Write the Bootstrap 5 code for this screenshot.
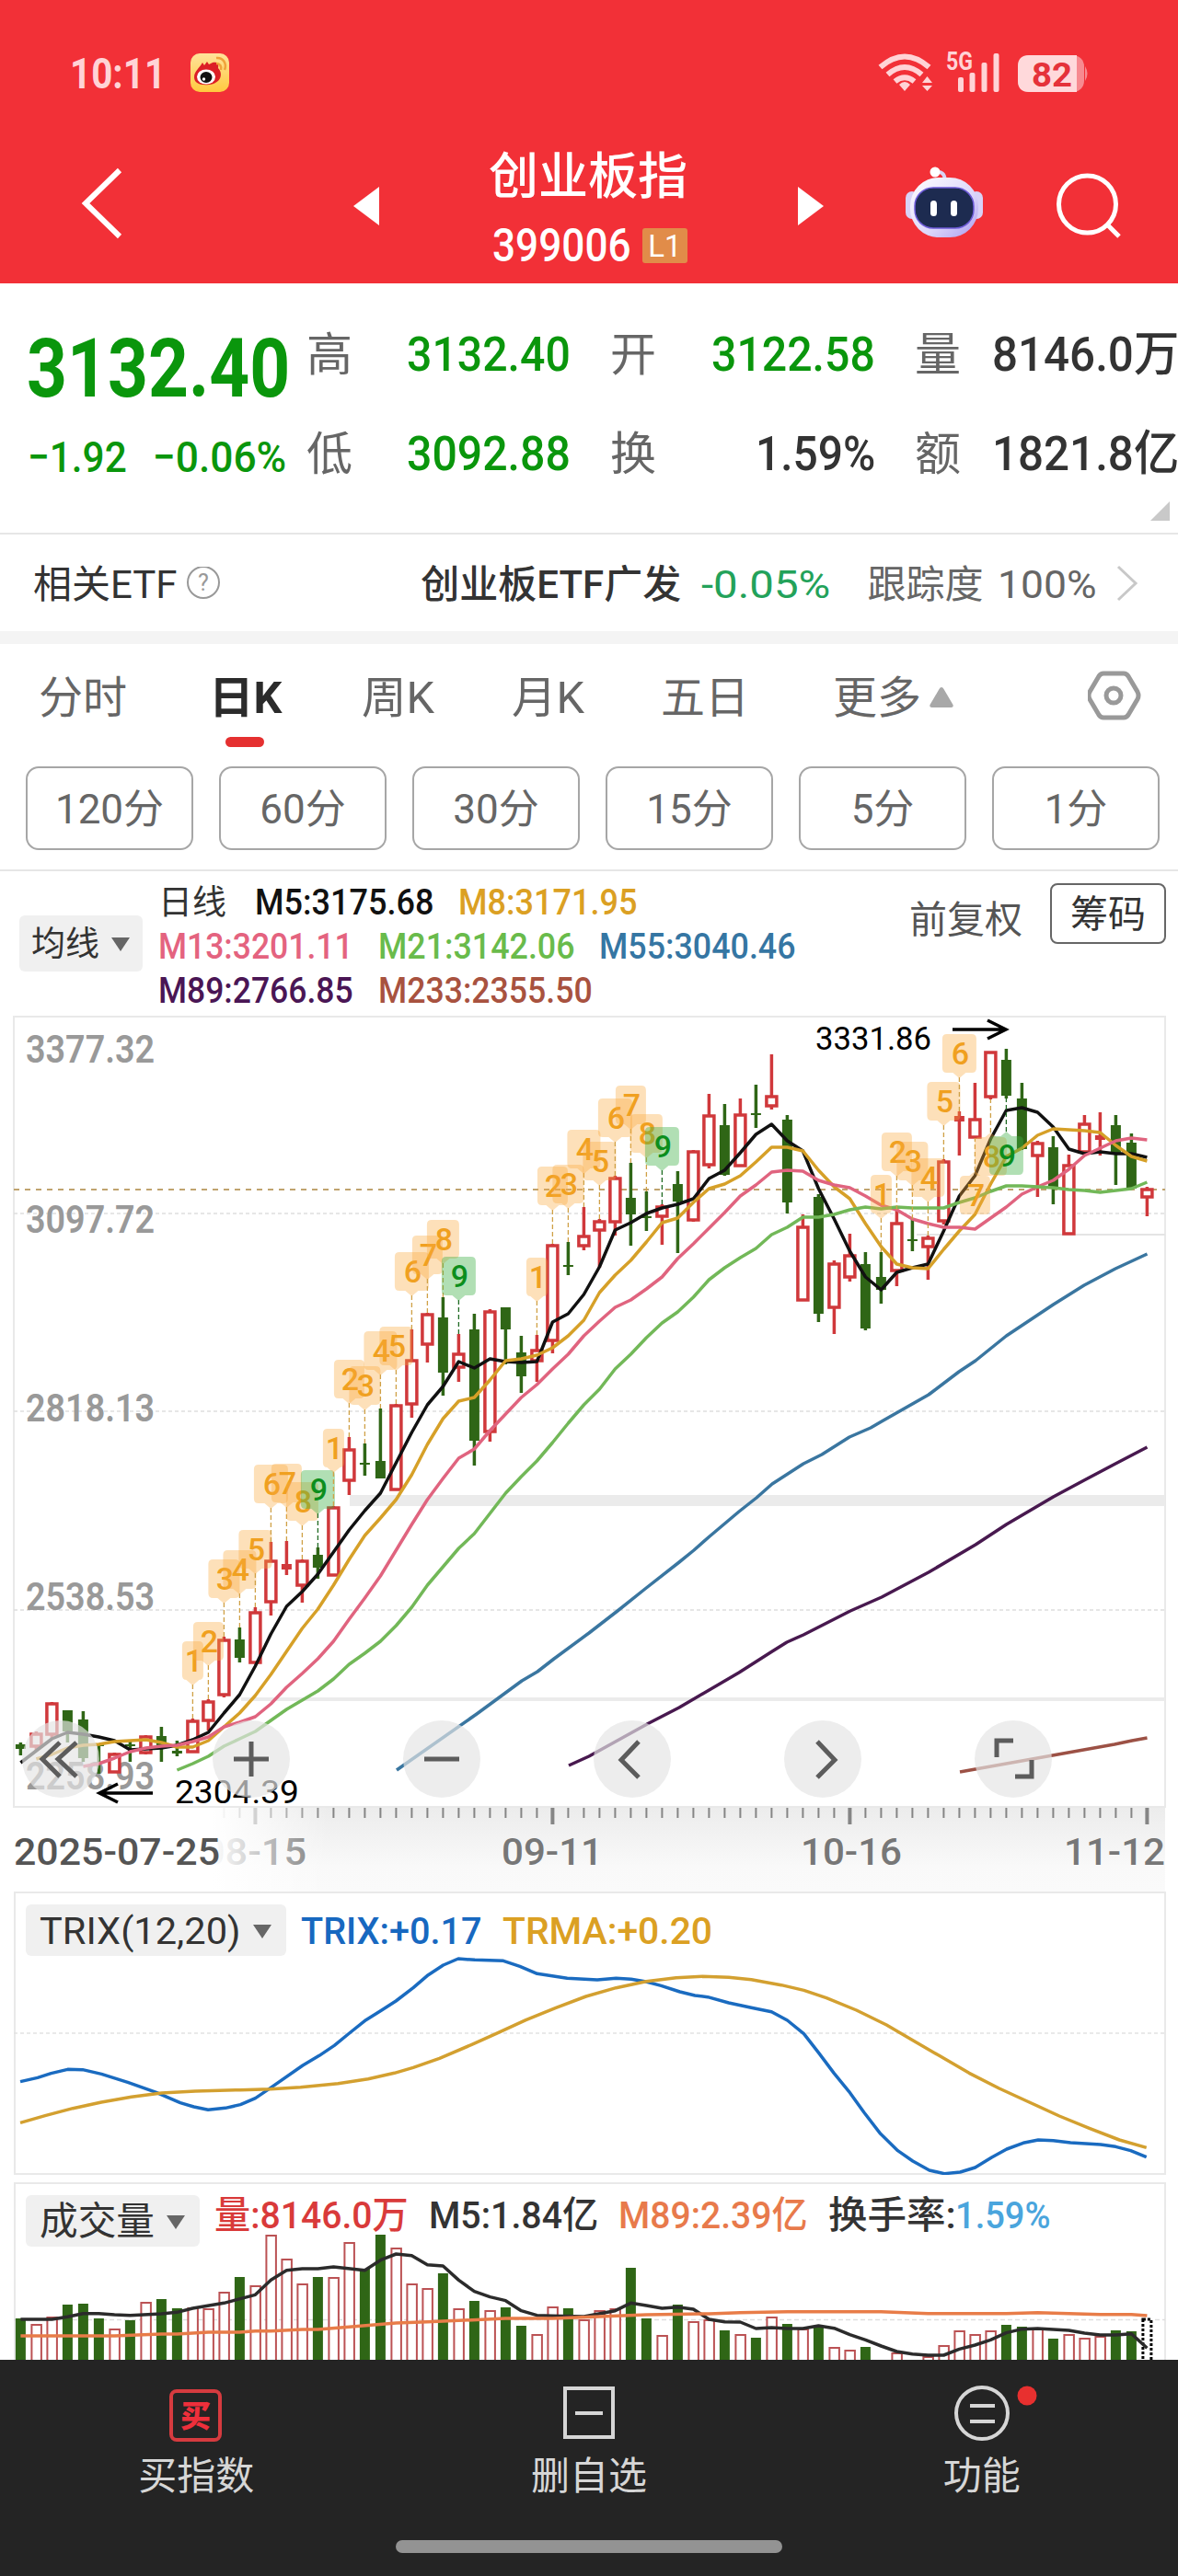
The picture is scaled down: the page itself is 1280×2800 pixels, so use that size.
<!DOCTYPE html>
<html lang="zh-CN">
<head>
<meta charset="utf-8">
<meta name="viewport" content="width=device-width, initial-scale=1">
<title>创业板指 399006</title>
<link href="https://cdn.jsdelivr.net/npm/bootstrap@5.3.0/dist/css/bootstrap.min.css" rel="stylesheet">
<style>
body{width:1280px;height:2800px;overflow:hidden;background:#fff;font-family:Roboto,"Noto Sans CJK SC",sans-serif;color:#333;line-height:1}
svg{display:block;flex-shrink:0}
[data-w]{display:inline-block;white-space:nowrap;transform-origin:0 50%}
.fw-mid{font-weight:500}
.c-up{color:#d93a3a}.c-down{color:#0a960c}.c-etf{color:#23a25a}.c-gray{color:#666}
.c-m5{color:#111}.c-gold{color:#dba023}.c-m13{color:#e4637f}.c-m21{color:#69bb4b}.c-m55{color:#3576a3}.c-m89{color:#4a1655}.c-m233{color:#a8523f}
.c-trix{color:#1768c0}.c-vol89{color:#e87a4b}.c-rate{color:#4aa5dd}
.g-s{margin-left:16px}.g-m{margin-left:22px}.g-l{margin-left:27px}.g-xl{margin-left:40px}
.topbar{background:#f23037;height:308px}
.status-row{height:158px;padding:0 96px 0 76px}
.clock{font-size:47px;font-weight:700;color:#ffd3d6}
.title-row{height:150px;display:grid;grid-template-columns:384px 147px 216px 120px 117px 158px 1fr}
.title-name{font-size:54px;font-weight:500;line-height:70px}
.title-code{font-size:50px;font-weight:500}
.code-line{height:78px;padding-left:4px}
.lv-tag{background:#e18c49;width:49px;height:38px;border-radius:3px;font-size:33px}
.quote{height:273px;border-bottom:2px solid #e6e6e6;position:relative;display:grid;grid-template-columns:302px 109px 221px 110px 221px 84px 1fr;grid-template-rows:108px 108px;padding:24px 0 0 31px;align-items:center}
.quote-side{grid-row:1 / 3;height:216px}
.last-price{font-size:89px;font-weight:700;padding-top:17px;height:120px;margin-left:-2px}
.last-diff{font-size:47px;font-weight:500;padding-top:21px;margin-left:-1px}
.q-label{font-size:50px;color:#666}
.q-val{font-size:52px;font-weight:500}
.corner{right:9px;bottom:13px}
.etf-row{height:105px;padding:5px 40px 0 36px;font-size:42px}
.band{height:14px;background:#f4f4f4}
.k-tabs{height:133px;display:grid;grid-template-columns:185px 166px 163px 162px 187px 277px 1fr;padding:28px 0 0 42px;font-size:48px;color:#666}
.k-tabs>div{height:62px;display:flex;align-items:center}
.k-active{color:#2b2b2b;font-weight:700;position:relative}
.k-active::after{content:"";position:absolute;left:18px;bottom:-22px;width:42px;height:11px;border-radius:6px;background:#e53030}
.hex{margin-top:-4px}
.mins{gap:28px;padding:0 20px 20px 28px;border-bottom:2px solid #e6e6e6;height:114px}
.btn-min{height:91px;width:182px;border:2px solid #a6a6a6;border-radius:14px;font-size:44px;color:#666;padding:3px 0 0;line-height:1}
.ma-row{height:157px;padding:10px 13px 0 21px}
.pill{background:#f0f0f0;border-radius:6px;color:#333}
.pill-ma{width:134px;height:61px;margin-top:38px;font-size:37px;padding:2px 13px 0}
.ma-lines{margin-left:17px;font-size:39px;font-weight:500}
.ma-lines>div{height:48px;display:flex;align-items:center}
.day-name{font-size:37px;font-weight:400;margin-right:4px}
.adj{font-size:41px;color:#555;margin-top:23px;width:153px}
.btn-chip{width:126px;height:66px;border:2px solid #666;border-radius:8px;font-size:41px;color:#333;margin-top:3px;padding:2px 0 0;line-height:1}
.chart{height:952px}
.tool-row{position:absolute;left:24px;top:766px;gap:123px}
.tool{width:84px;height:84px;border-radius:50%;background:rgba(228,228,228,.68);border:0;padding:0}
.panel{margin:0 13px 0 15px;border:2px solid #e9e9e9;position:relative}
.panel>svg{position:absolute;left:-17px;top:-2px}
.panel-head{position:relative;padding:12px 0 0 11px;font-size:41px;font-weight:500}
.panel-head .pill{height:56px;font-weight:400}
.p-trix{height:308px}
.p-vol{height:193px;margin-top:8px;border-bottom:0}
.pill-trix{width:283px;padding:3px 15px 0}
.pill-vol{width:189px;padding:2px 15px 0;font-size:42px}
.trix-val{padding-top:2px}
.vol-vals{height:44px;margin-bottom:12px}
.tabbar{height:235px;background:#242424;color:#d6d6d6;position:relative}
.tabbar .col-4{padding-top:27px;font-size:42px}
.tabbar .lbl{margin-top:16px;line-height:44px}
.home-bar{width:420px;height:14px;border-radius:7px;background:#939393;position:absolute;left:430px;bottom:25px}
</style>
<script src="https://cdn.jsdelivr.net/npm/bootstrap@5.3.0/dist/js/bootstrap.bundle.min.js"></script>
</head>
<body>
<header class="topbar text-white">
  <div class="status-row d-flex align-items-center">
    <span class="clock" data-w="104">10:11</span>
    <svg class="ms-4" width="48" height="46" viewBox="205 57 48 46"><defs><linearGradient id="wb" x1="0" y1="0" x2="0" y2="1"><stop offset="0" stop-color="#ffe39a"/><stop offset="1" stop-color="#ffc93f"/></linearGradient></defs><rect x="208" y="59" width="42" height="42" rx="10" fill="url(#wb)"/><path d="M212 85c0-7 6-10 9-16l2 3 3-4 2 3 4-2c5-1 7 1 6 6 6 6 3 17-10 18-10 1-16-2-16-8z" fill="#dc1f26"/><ellipse cx="225" cy="84.500" rx="10" ry="8" fill="#fff"/><ellipse cx="225" cy="85" rx="6.500" ry="6" fill="#111"/><circle cx="222.500" cy="87" r="1.700" fill="#fff"/><path d="M236 70c4 0 6 3 5 7M236 64c7-1 12 6 9 13" fill="none" stroke="#f0a23a" stroke-width="2.500"/></svg>
    <svg class="ms-auto" width="232" height="80" viewBox="950 40 232 80" fill="none" stroke="#ffd3d6"><g stroke-width="6"><path d="M954.500 74Q981 51 1007.500 74M962.500 82Q981 66 999.500 82M970.500 89.500Q981 81 991.500 89.500"/></g><path d="M975 93q6-6 12 0l-6 7z" fill="#ffd3d6" stroke="none"/><path d="M1000 91l5.500-7 5.500 7zM1000 94l5.500 6 5.500-6z" fill="#ffd3d6" stroke="none"/><g fill="#ffd3d6" stroke="none"><text x="1026" y="77" font-size="27" font-weight="700" textLength="29" lengthAdjust="spacingAndGlyphs">5G</text><rect x="1039" y="85" width="6" height="16" rx="2"/><rect x="1051.500" y="80" width="6" height="21" rx="2"/><rect x="1064.500" y="69" width="6" height="32" rx="2"/><rect x="1077.500" y="59" width="6" height="42" rx="2"/><rect x="1104" y="61" width="72" height="40" rx="12" fill="#f78a90"/><path d="M1168 61h-52q-12 0-12 12v16q0 12 12 12h52z" fill="#ffd9db"/><path d="M1177 73q5 8 0 16z" fill="#f78a90"/><text x="1119" y="95" font-size="36" font-weight="700" fill="#e5323a" textLength="44" lengthAdjust="spacingAndGlyphs">82</text></g></svg>
  </div>
  <div class="title-row">
    <svg width="384" height="130" viewBox="0 158 384 130"><path d="M130 185L93 221l37 36" fill="none" stroke="#fff" stroke-width="6"/></svg>
    <svg width="147" height="130" viewBox="384 158 147 130"><path d="M412 203v42l-28-21z" fill="#fff"/></svg>
    <div>
      <div class="title-name" data-w="216">创业板指</div>
      <div class="code-line d-flex align-items-center justify-content-between"><span class="title-code" data-w="151">399006</span><span class="lv-tag d-flex align-items-center justify-content-center">L1</span></div>
    </div>
    <div></div>
    <svg width="116" height="130" viewBox="867 158 116 130"><path d="M867 203v42l28-21z" fill="#fff"/></svg>
    <svg width="158" height="130" viewBox="983 158 158 130"><defs><linearGradient id="rb" x1="0" y1="0" x2="1" y2="1"><stop offset="0" stop-color="#fff"/><stop offset=".6" stop-color="#dcd6fa"/><stop offset="1" stop-color="#a99af0"/></linearGradient></defs><path d="M1014 188q12-4 12 10" fill="none" stroke="#d9d3f5" stroke-width="4"/><circle cx="1015" cy="187" r="5.500" fill="#fff"/><rect x="983" y="208" width="14" height="30" rx="7" fill="#d8d2f7"/><rect x="1053" y="208" width="14" height="30" rx="7" fill="#d8d2f7"/><rect x="988" y="193" width="74" height="65" rx="31" fill="url(#rb)"/><rect x="993" y="204" width="64" height="44" rx="20" fill="#1d2b50" stroke="#6d5bd8" stroke-width="1.500"/><rect x="1010" y="218" width="7" height="17" rx="3.500" fill="#fff"/><rect x="1032" y="218" width="7" height="17" rx="3.500" fill="#fff"/></svg>
    <svg width="100" height="130" viewBox="1141 158 100 130"><g fill="none" stroke="#fff" stroke-width="5"><circle cx="1180.500" cy="222" r="31"/><path d="M1202 244l13 13"/></g></svg>
  </div>
</header>

<section class="quote">
  <div class="quote-side c-down">
    <div class="last-price d-flex align-items-center"><span data-w="286">3132.40</span></div>
    <div class="last-diff d-flex"><span data-w="108">−1.92</span><span class="ms-4 ps-1" data-w="149">−0.06%</span></div>
  </div>
  <div class="q-label">高</div><div class="q-val c-down"><span data-w="178">3132.40</span></div>
  <div class="q-label">开</div><div class="q-val c-down"><span data-w="178">3122.58</span></div>
  <div class="q-label">量</div><div class="q-val"><span data-w="203">8146.0万</span></div>
  <div class="q-label">低</div><div class="q-val c-down"><span data-w="178">3092.88</span></div>
  <div class="q-label">换</div><div class="q-val ps-5"><span data-w="130">1.59%</span></div>
  <div class="q-label">额</div><div class="q-val"><span data-w="203">1821.8亿</span></div>
  <svg class="corner position-absolute" width="21" height="21" viewBox="0 0 21 21"><path d="M21 0v21H0z" fill="#c9c9c9"/></svg>
</section>

<section class="etf-row d-flex align-items-center">
  <span data-w="157">相关ETF</span>
  <svg class="ms-2" width="40" height="40" viewBox="0 0 40 40"><circle cx="20" cy="17" r="17" fill="none" stroke="#999" stroke-width="2"/><text x="20" y="26" font-size="25" fill="#999" text-anchor="middle">?</text></svg>
  <span class="fw-mid ms-auto" data-w="283">创业板ETF广发</span>
  <span class="c-etf g-m" data-w="140">-0.05%</span>
  <span class="c-gray g-xl" data-w="126">跟踪度</span>
  <span class="c-gray g-s" data-w="108">100%</span>
  <svg class="ms-3" width="32" height="44" viewBox="0 0 32 44"><path d="M7 2l19 18L7 38" fill="none" stroke="#c8c8c8" stroke-width="3"/></svg>
</section>
<div class="band"></div>

<nav class="k-tabs">
  <div>分时</div>
  <div class="k-active"><span data-w="80">日K</span></div>
  <div><span data-w="79">周K</span></div>
  <div><span data-w="79">月K</span></div>
  <div>五日</div>
  <div>更多<svg class="ms-2" width="28" height="24" viewBox="0 0 28 24"><path d="M14 0q1.500 0 2.500 2l10 17q1 3-2 3h-21q-3 0-2-3l10-17q1-2 2.500-2z" fill="#a8a8a8"/></svg></div>
  <div><svg class="hex" width="60" height="62" viewBox="1182 726 60 62" fill="none" stroke="#999" stroke-width="5"><path d="M1199 732h22q3 0 5 3l10 17q2 4 0 8l-10 17q-2 3-5 3h-22q-3 0-5-3l-10-17q-2-4 0-8l10-17q2-3 5-3z"/><circle cx="1210" cy="756" r="8"/></svg></div>
</nav>
<div class="mins d-flex">
  <button class="btn btn-min">120分</button><button class="btn btn-min">60分</button><button class="btn btn-min">30分</button><button class="btn btn-min">15分</button><button class="btn btn-min">5分</button><button class="btn btn-min">1分</button>
</div>

<section class="ma-row d-flex align-items-start">
  <div class="pill pill-ma d-flex align-items-center justify-content-between">均线<svg width="22" height="15" viewBox="0 0 22 15"><path d="M1 0h20L11 15z" fill="#666"/></svg></div>
  <div class="ma-lines">
    <div><span class="day-name">日线</span><span class="g-l c-m5" data-w="194">M5:3175.68</span><span class="g-l c-gold" data-w="194">M8:3171.95</span></div>
    <div><span class="c-m13" data-w="212">M13:3201.11</span><span class="g-l c-m21" data-w="214">M21:3142.06</span><span class="g-l c-m55" data-w="214">M55:3040.46</span></div>
    <div><span class="c-m89" data-w="212">M89:2766.85</span><span class="g-l c-m233" data-w="233">M233:2355.50</span></div>
  </div>
  <div class="adj ms-auto">前复权</div>
  <button class="btn btn-chip">筹码</button>
</section>

<section class="chart position-relative">
  <svg id="kline" width="1280" height="952" viewBox="0 1104 1280 952"></svg>
  <div class="tool-row d-flex">
    <button class="tool"><svg width="84" height="84" viewBox="-42 -42 84 84" fill="none" stroke="#5c5c5c" stroke-width="5"><path d="M-1-18L-20 0-1 19M17-18L-3 0 17 19"/></svg></button>
    <button class="tool"><svg width="84" height="84" viewBox="-42 -42 84 84" stroke="#5c5c5c" stroke-width="5"><path d="M-19 0h38M0-19v38"/></svg></button>
    <button class="tool"><svg width="84" height="84" viewBox="-42 -42 84 84" stroke="#5c5c5c" stroke-width="5"><path d="M-19 0h38"/></svg></button>
    <button class="tool"><svg width="84" height="84" viewBox="-42 -42 84 84" fill="none" stroke="#5c5c5c" stroke-width="5"><path d="M7-19L-12 1 7 20"/></svg></button>
    <button class="tool"><svg width="84" height="84" viewBox="-42 -42 84 84" fill="none" stroke="#5c5c5c" stroke-width="5"><path d="M-6-19L13 1-6 20"/></svg></button>
    <button class="tool"><svg width="84" height="84" viewBox="-42 -42 84 84" fill="none" stroke="#5c5c5c" stroke-width="5"><path d="M0-20h-18v18M2 19h18V1"/></svg></button>
  </div>
</section>

<section class="panel p-trix">
  <svg id="trix" width="1280" height="308" viewBox="0 2056 1280 308"></svg>
  <div class="panel-head d-flex align-items-center">
    <div class="pill pill-trix d-flex align-items-center justify-content-between"><span data-w="218">TRIX(12,20)</span><svg width="22" height="15" viewBox="0 0 22 15"><path d="M1 0h20L11 15z" fill="#666"/></svg></div>
    <span class="g-s trix-val c-trix" data-w="197">TRIX:+0.17</span>
    <span class="g-m trix-val c-gold" data-w="228">TRMA:+0.20</span>
  </div>
</section>

<section class="panel p-vol">
  <svg id="vol" width="1280" height="193" viewBox="0 2372 1280 193"></svg>
  <div class="panel-head d-flex align-items-center">
    <div class="pill pill-vol d-flex align-items-center justify-content-between"><span data-w="125">成交量</span><svg width="22" height="15" viewBox="0 0 22 15"><path d="M1 0h20L11 15z" fill="#666"/></svg></div>
    <div class="vol-vals d-flex align-items-center">
      <span class="c-up g-s" data-w="211">量:8146.0万</span>
      <span class="g-m" data-w="184">M5:1.84亿</span>
      <span class="g-m c-vol89" data-w="206">M89:2.39亿</span>
      <span class="g-m" data-w="139">换手率:</span>
      <span class="c-rate" data-w="104">1.59%</span>
    </div>
  </div>
</section>

<footer class="tabbar">
  <div class="row g-0 text-center">
    <div class="col-4"><svg class="mx-auto" width="64" height="62" viewBox="181 2592 64 62"><rect x="186" y="2599" width="53" height="53" rx="6" fill="none" stroke="#d63b3f" stroke-width="4"/><text x="212.500" y="2638" font-size="33" font-weight="900" fill="#ee2f3b" text-anchor="middle">买</text></svg><div class="lbl">买指数</div></div>
    <div class="col-4"><svg class="mx-auto" width="64" height="62" viewBox="607 2592 64 62"><g fill="none" stroke="#d6d6d6" stroke-width="4"><path d="M613 2596h52v53h-52zM624 2623h30"/></g></svg><div class="lbl">删自选</div></div>
    <div class="col-4"><svg class="mx-auto" width="124" height="62" viewBox="1004 2592 124 62"><g fill="none" stroke="#d6d6d6" stroke-width="4"><circle cx="1066" cy="2623" r="28"/><path d="M1053 2615h27M1053 2632h27"/></g><circle cx="1115" cy="2604" r="10.500" fill="#e8302f"/></svg><div class="lbl">功能</div></div>
  </div>
  <div class="home-bar"></div>
</footer>

<script>
document.querySelectorAll('[data-w]').forEach(function (e) {
  var n = e.offsetWidth, w = +e.dataset.w;
  e.style.transform = 'scaleX(' + w / n + ')';
  e.style.marginRight = (w - n) + 'px';
});

var X = function (i) { return 22.4 + 17 * i; };
var RED = '#d0383b', GREEN = '#2f6616';
var poly = function (pts, c, w) { return '<polyline fill="none" stroke-linejoin="round" stroke="' + c + '" stroke-width="' + w + '" points="' + pts.map(function (p) { return p.join(); }).join(' ') + '"/>'; };
var series = function (start, ys) { return ys.map(function (y, k) { return [X(start + k), y]; }); };
var line = function (x1, y1, x2, y2, c, w, d) { return '<line x1="' + x1 + '" y1="' + y1 + '" x2="' + x2 + '" y2="' + y2 + '" stroke="' + c + '" stroke-width="' + w + '"' + (d ? ' stroke-dasharray="' + d + '"' : '') + '/>'; };
var text = function (x, y, s, size, c, w, weight) { return '<text x="' + x + '" y="' + y + '" font-size="' + size + '" fill="' + c + '" font-weight="' + (weight || 400) + '" textLength="' + w + '" lengthAdjust="spacingAndGlyphs">' + s + '</text>'; };

// kind, high, body top, body bottom, low
var K = ['g 1894 1896 1901 1908','r 1882 1884 1898 1903','r 1850 1851 1885 1889','g 1859 1859 1882 1894','g 1860 1869 1911 1915','g 1895 1896 1898 1928','r 1905 1906 1926 1927','g 1893 1896 1898 1915','r 1886 1887 1905 1907','g 1877 1887 1897 1915','g 1892 1903 1906 1909','r 1868 1870 1904 1905','r 1847 1849 1870 1881','r 1779 1782 1842 1845','g 1769 1782 1802 1807','r 1747 1752 1807 1808','r 1676 1696 1741 1756','r 1675 1700 1706 1712','r 1695 1696 1723 1742','g 1682 1690 1704 1716','r 1637 1638 1712 1713','r 1562 1575 1609 1625','g 1569 1590 1592 1604','g 1531 1588 1607 1607','r 1526 1527 1619 1620','r 1445 1478 1526 1541','r 1427 1428 1461 1481','g 1410 1432 1492 1517','r 1450 1471 1486 1502','g 1428 1445 1566 1593','r 1423 1425 1556 1567','g 1421 1421 1445 1483','g 1452 1470 1496 1514','r 1451 1467 1479 1502','r 1352 1353 1457 1471','g 1350 1375 1377 1386','r 1312 1343 1354 1359','r 1325 1327 1337 1378','r 1278 1280 1328 1343','g 1264 1302 1320 1354','g 1295 1322 1324 1338','r 1309 1311 1322 1353','g 1273 1287 1306 1362','r 1250 1251 1326 1328','r 1189 1212 1266 1270','g 1200 1223 1277 1278','r 1194 1211 1267 1268','g 1179 1210 1212 1226','r 1146 1191 1202 1206','g 1212 1217 1307 1319','r 1320 1333 1413 1414','g 1298 1301 1428 1437','r 1370 1373 1421 1450','r 1341 1364 1388 1393','g 1361 1374 1444 1446','g 1361 1388 1402 1417','r 1315 1329 1381 1398','g 1325 1347 1349 1360','r 1343 1345 1355 1391','r 1260 1262 1327 1331','r 1208 1213 1219 1256','r 1177 1216 1236 1237','r 1143 1143 1192 1195','g 1140 1152 1191 1194','g 1177 1194 1249 1250','r 1240 1242 1256 1301','g 1235 1247 1290 1309','r 1255 1266 1341 1342','r 1212 1221 1252 1255','r 1209 1234 1239 1256','g 1212 1223 1253 1288','g 1232 1242 1292 1293','r 1290 1292 1301 1322']
  .map(function (s) { var a = s.split(' '); return [a[0], +a[1], +a[2], +a[3], +a[4]]; });

(function () {
  var h = '<defs><linearGradient id="axv" x1="0" y1="0" x2="0" y2="1"><stop offset="0" stop-color="#ececec"/><stop offset=".7" stop-color="#f9f9f9"/><stop offset="1" stop-color="#fafafa"/></linearGradient><linearGradient id="axh"><stop offset="0" stop-color="#fff"/><stop offset=".55" stop-color="#fff"/><stop offset=".85" stop-color="#fff" stop-opacity="0"/></linearGradient></defs>';
  h += '<rect x="15" y="1965" width="1251" height="91" fill="url(#axv)"/>';
  for (var i = 10; i < 73; i++) {
    var major = (i - 15) % 19 === 0;
    h += line(X(i), 1965, X(i), major ? 1983 : 1976, '#858585', major ? 4 : 2);
  }
  h += text(220, 2027, '08-15', 41, '#777', 113, 500);
  h += '<rect x="0" y="1965" width="420" height="91" fill="url(#axh)"/>';
  h += text(15, 2027, '2025-07-25', 41, '#555', 224, 500) + text(545, 2027, '09-11', 41, '#777', 110, 500) + text(870, 2027, '10-16', 41, '#777', 110, 500) + text(1156, 2027, '11-12', 41, '#777', 110, 500);
  h += '<rect x="15" y="1105" width="1251" height="859" fill="none" stroke="#e9e9e9" stroke-width="2"/>';
  h += '<rect x="380" y="1625" width="886" height="12" fill="#ebebeb"/><rect x="262" y="1845" width="1004" height="4" fill="#ebebeb"/><rect x="996" y="1341" width="270" height="2" fill="#e4e4e4"/>';
  [1319, 1534, 1750].forEach(function (y) { h += line(15, y, 1266, y, '#dedede', 1.5, '4 3'); });
  h += line(15, 1293, 1266, 1293, '#bfa36e', 2, '6 6');
  [['3377.32', 1155], ['3097.72', 1340], ['2818.13', 1545], ['2538.53', 1750], ['2258.93', 1945]].forEach(function (a) { h += text(28, a[1], a[0], 42, '#999', 140, 600); });

  K.forEach(function (k, i) {
    var x = X(i), c = k[0] === 'r' ? RED : GREEN, f = k[3] - k[2];
    if (k[0] === 'g' || f < 7) h += line(x, k[1], x, k[4], c, 3.5) + '<rect x="' + (x - 5.5) + '" y="' + k[2] + '" width="11" height="' + Math.max(f, 2) + '" fill="' + c + '"/>';
    else h += line(x, k[1], x, k[2], c, 3.5) + line(x, k[3], x, k[4], c, 3.5) + '<rect x="' + (x - 5.5) + '" y="' + (k[2] + 1) + '" width="11" height="' + (f - 1) + '" fill="#fff" stroke="' + c + '" stroke-width="3.5"/>';
  });

  h += poly(series(0, [1916,1903,1890,1883,1885,1888,1892,1902,1901,1900,1897,1891,1883,1862,1842,1811,1776,1746,1730,1711,1687,1663,1642,1623,1590,1557,1527,1507,1480,1487,1477,1480,1481,1480,1437,1428,1407,1377,1337,1329,1319,1313,1309,1303,1281,1272,1253,1233,1222,1240,1251,1292,1325,1360,1388,1402,1383,1378,1374,1338,1300,1278,1238,1207,1204,1209,1225,1249,1254,1252,1254,1254,1258]), '#111', 3.5);
  h += poly(series(1, [1912,1907,1900,1897,1896,1893,1892,1891,1894,1899,1899,1892,1877,1862,1843,1820,1795,1770,1749,1723,1695,1669,1650,1630,1603,1570,1542,1523,1519,1500,1479,1477,1473,1465,1452,1435,1405,1386,1370,1350,1329,1324,1307,1292,1287,1278,1263,1247,1247,1251,1272,1290,1303,1330,1355,1374,1378,1379,1358,1338,1320,1287,1257,1248,1234,1227,1228,1229,1231,1245,1257,1262]), '#d6a028', 3.5);
  h += poly(series(4, [1920,1917,1911,1904,1900,1898,1897,1893,1888,1877,1872,1866,1852,1834,1819,1803,1784,1760,1737,1713,1685,1657,1630,1607,1585,1575,1555,1537,1519,1505,1488,1472,1452,1436,1421,1413,1401,1388,1368,1352,1335,1318,1300,1288,1274,1272,1273,1283,1288,1291,1300,1310,1315,1325,1330,1334,1334,1336,1324,1312,1298,1290,1283,1271,1256,1248,1240,1237,1239]), '#e0647f', 3.5);
  h += poly(series(10, [1924,1917,1909,1898,1890,1882,1870,1858,1848,1838,1825,1809,1797,1784,1767,1747,1723,1703,1683,1667,1645,1623,1605,1588,1568,1547,1527,1510,1488,1472,1454,1438,1426,1410,1391,1378,1367,1357,1342,1334,1323,1323,1320,1315,1312,1314,1312,1313,1313,1313,1307,1302,1295,1289,1289,1290,1291,1293,1294,1296,1294,1292,1285]), '#72b858', 3.5);
  h += poly([[431,1924],[518,1863],[533,1852],[567,1827],[584,1817],[602,1803],[640,1775],[671,1751],[701,1727],[738,1698],[754,1685],[771,1670],[803,1643],[822,1628],[839,1613],[873,1591],[893,1581],[923,1562],[946,1552],[958,1545],[1009,1516],[1042,1491],[1060,1479],[1093.5,1452],[1144.5,1418],[1178,1397],[1212,1379],[1246.5,1363]], '#3a76a0', 3.5);
  h += poly([[618,1919],[640,1909],[705,1873],[738,1856],[803,1818],[839,1795],[855,1785],[873,1777],[924,1751],[958,1736],[1009,1709],[1060,1679],[1093.5,1657],[1144.5,1627],[1178,1609],[1195,1600],[1212,1591],[1246.5,1573]], '#48194f', 3.5);
  h += poly([[1043,1926],[1211,1896],[1230,1892],[1246.5,1889]], '#9c5145', 3.5);

  // Nine-turn sequence markers: first candle, first digit, last digit, below
  var W = [0, 23, 33, 34, 36, 36, 37, 33, 35, 37];
  [[11, 1, 9], [20, 1, 9], [33, 1, 9], [55, 1, 6], [61, 7, 9, 1]].forEach(function (r) {
    for (var n = r[1]; n <= r[2]; n++) {
      var i = r[0] + n - r[1], x = X(i), w = W[n] / 2, up = !r[3], g = n === 9;
      var t = up ? K[i][1] - 84 : K[i][4] + 41, tc = g ? '#0c8e1c' : '#f0a020', lc = g ? '#1f6a22' : '#cfa046';
      h += up ? line(x, t + 47, x, K[i][1], lc, 1.3, '5 3') : line(x, t - 5, x, K[i][4], lc, 1.3, '5 3');
      h += '<g fill="' + (g ? '#3cb043' : '#faa93c') + '" fill-opacity="' + (g ? .4 : .36) + '"><path d="M' + (x - w + 5) + ' ' + t + (up ? '' : 'H' + (x - 6) + 'l6 -5l6 5') + 'H' + (x + w - 5) + 'q5 0 5 5v32q0 5 -5 5' + (up ? 'H' + (x + 7) + 'l-7 6l-7 -6' : '') + 'H' + (x - w + 5) + 'q-5 0 -5 -5v-32q0 -5 5 -5z"/></g>';
      h += '<text x="' + (x + 1) + '" y="' + (t + 32.5) + '" font-size="34" text-anchor="middle" font-weight="500" fill="' + tc + '">' + n + '</text>';
    }
  });
  h += text(886, 1141, '3331.86', 35, '#000', 126) + text(190, 1960, '2304.39', 35, '#000', 135);
  h += '<g fill="none" stroke="#000" stroke-width="3.5"><path d="M1035 1119h57M1073 1109l20 10l-20 10"/><path d="M166 1949h-57M128 1939l-20 10l20 10"/></g>';
  document.getElementById('kline').innerHTML = h;
})();

(function () {
  var m = function (a) { return a.map(function (p) { return [p[0] / 1.225, 2040 + p[1] / 3]; }); };
  var h = line(15, 2210, 1266, 2210, '#e2e2e2', 1.5, '4 3');
  h += poly(m([[27,668],[50,655],[68,641],[90,628],[110,629],[135,643],[170,670],[208,703],[240,737],[258,750],[277,760],[300,754],[320,743],[340,722],[358,692],[403,615],[425,583],[445,550],[465,510],[487,467],[508,435],[527,405],[550,362],[570,320],[590,288],[610,267],[632,271],[670,274],[692,292],[715,316],[755,331],[795,336],[820,331],[840,334],[860,342],[880,355],[905,375],[925,387],[942,392],[970,411],[1000,427],[1027,440],[1048,468],[1070,512],[1090,575],[1110,640],[1130,700],[1150,768],[1172,838],[1195,893],[1215,927],[1237,957],[1257,968],[1278,963],[1298,948],[1320,915],[1340,888],[1362,868],[1382,858],[1402,860],[1425,867],[1465,873],[1485,880],[1505,893],[1526,914]]), '#1a6bc0', 3.5);
  h += poly(m([[27,802],[60,779],[97,755],[135,735],[175,718],[215,705],[260,699],[320,695],[360,692],[400,686],[450,674],[490,659],[525,640],[550,622],[585,592],[630,545],[660,512],[700,467],[740,427],[780,390],[820,362],[860,341],[900,329],[935,325],[970,328],[1000,335],[1040,353],[1070,370],[1100,395],[1140,435],[1180,483],[1215,533],[1250,583],[1290,640],[1330,690],[1370,735],[1410,780],[1450,820],[1490,858],[1526,883]]), '#d3a030', 3.5);
  document.getElementById('trix').innerHTML = h;
})();

(function () {
  var tops = [2520,2526,2518,2505,2504,2520,2531,2522,2502,2499,2509,2508,2509,2491,2475,2484,2429,2455,2482,2475,2475,2437,2466,2429,2443,2482,2487,2471,2509,2501,2511,2508,2528,2537,2507,2509,2521,2511,2509,2465,2520,2538,2505,2523,2521,2533,2537,2541,2518,2526,2531,2528,2551,2554,2551,2570,2557,2570,2561,2549,2533,2537,2533,2527,2529,2531,2542,2537,2541,2539,2533,2534,2520];
  var h = line(15, 2521.5, 1266, 2521.5, '#dedede', 1.3, '5 3');
  tops.forEach(function (t, i) {
    var x = X(i) - 5.5;
    if (i === 72) h += '<rect x="' + (x + 1) + '" y="' + (t + 1) + '" width="9" height="60" fill="#fff" stroke="#000" stroke-width="3" stroke-dasharray="3 2"/>';
    else if (K[i][0] === 'g') h += '<rect x="' + x + '" y="' + t + '" width="11" height="150" fill="' + GREEN + '"/>';
    else h += '<rect x="' + (x + .5) + '" y="' + (t + 1) + '" width="10.5" height="150" fill="#fff" stroke="#bb5254" stroke-width="2"/>';
  });
  var m = function (a) { return a.map(function (p) { return [X(p[0]), 2360 + p[1] / 3]; }); };
  h += poly(m([[0,483],[2,483],[3,475],[4,464],[5,464],[6,468],[7,470],[9,465],[10,460],[11,447],[13,430],[15,403],[16,355],[17,323],[18,318],[19,318],[20,312],[22,323],[23,290],[24,270],[25,275],[26,305],[27,309],[28,355],[29,392],[30,410],[31,422],[32,455],[33,470],[34,472],[36,474],[38,455],[39,430],[40,438],[41,447],[42,443],[43,450],[44,483],[45,491],[46,492],[47,513],[48,510],[49,513],[50,513],[51,504],[52,512],[53,533],[54,550],[55,570],[56,588],[57,596],[58,600],[59,600],[60,580],[61,567],[62,550],[63,527],[64,515],[65,513],[66,516],[67,519],[68,528],[69,534],[70,534],[71,530],[72,577]]), '#2b2b2b', 3.5);
  h += poly(m([[0,537],[6,537],[9,531],[10,531],[12,525],[14,525],[15,521],[16,521],[18,516],[19,516],[21,508],[24,495],[26,491],[28,487],[31,480],[34,480],[37,474],[40,468],[44,465],[46,461],[49,458],[55,458],[58,464],[63,464],[65,461],[69,467],[71,467],[72,471]]), '#e87c48', 3.5);
  document.getElementById('vol').innerHTML = h;
})();
</script>
</body>
</html>
